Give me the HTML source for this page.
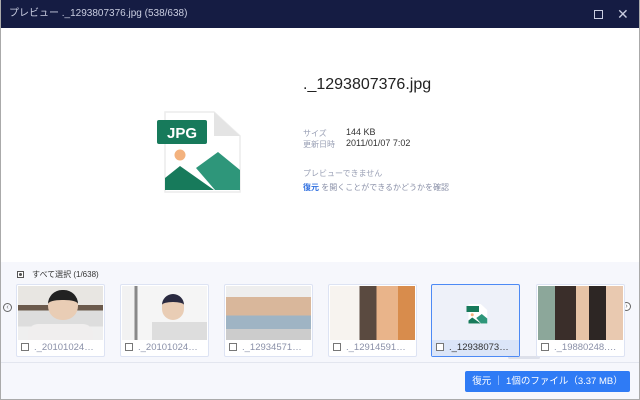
<!DOCTYPE html>
<html><head><meta charset="utf-8"><style>
*{margin:0;padding:0;box-sizing:border-box}
body{width:640px;height:400px;overflow:hidden;font-family:"Liberation Sans","Noto Sans CJK JP",sans-serif;background:#fff;position:relative}
.title{position:absolute;left:0;top:0;width:640px;height:28px;background:#151c43;color:#c9cde0;font-size:10px;line-height:28px;padding-left:9px}
.main{position:absolute;left:0;top:28px;width:640px;height:234px;background:#fff}
.strip{position:absolute;left:0;top:262px;width:640px;height:138px;background:#f6f7fc}
.thumb{position:absolute;top:284px;width:89px;height:73px;background:#fff;border:1px solid #dde3f3;border-radius:2px}
.thumb .img{position:absolute;left:1px;top:1px;right:1px;height:54px;overflow:hidden}
.thumb .lab{position:absolute;left:4px;top:57px;font-size:9.5px;color:#8a90a8;white-space:nowrap}
.cb{display:inline-block;width:8px;height:8px;border:1px solid #777;vertical-align:-1px;margin-right:5px;background:#fff}
.sel{border:1.5px solid #4d8af5;background:#eef1f9}
.btn{position:absolute;left:465px;top:371px;width:165px;height:21px;background:#2f7bf5;border-radius:2px;color:#fff;font-size:9.5px;text-align:center;line-height:21px}
.frame{position:absolute;left:0;top:0;width:640px;height:400px;border:1px solid #aaa;border-top:none;pointer-events:none}
</style></head><body>
<div class="title">プレビュー ._1293807376.jpg (538/638)
<span style="position:absolute;left:594px;top:10px;width:9px;height:9px;border:1.3px solid #c9cde0"></span>
<span style="position:absolute;left:617px;top:0;font-size:14px;color:#c9cde0">✕</span></div>
<div class="main">
<svg style="position:absolute;left:150px;top:72px" width="100" height="100" viewBox="150 100 100 100">
<path d="M165 112 H214 L240 136 V192 H165 Z" fill="#fff" stroke="#ececec" stroke-width="1.5"/>
<path d="M214 112 V136 H240 Z" fill="#e4e4e4"/>
<rect x="157" y="120" width="50" height="24" rx="2" fill="#177a5b"/>
<text x="182" y="138" font-family="Liberation Sans" font-weight="bold" font-size="15" fill="#fff" text-anchor="middle">JPG</text>
<circle cx="180" cy="155" r="5.5" fill="#f3b27e"/>
<path d="M196 168 L218 152 L240 170 V190 H215 Z" fill="#2e967a"/>
<path d="M165 178 L180 166 L214 190 H165 Z" fill="#177a5b"/>
</svg>
<div style="position:absolute;left:303px;top:48px;font-size:16px;color:#222">._1293807376.jpg</div>
<div style="position:absolute;left:303px;top:100px;font-size:8px;color:#9aa0b5;line-height:11px">サイズ<br>更新日時</div>
<div style="position:absolute;left:346px;top:99px;font-size:9px;color:#333;line-height:11px">144 KB<br>2011/01/07 7:02</div>
<div style="position:absolute;left:303px;top:140px;font-size:8px;color:#9aa0b5">プレビューできません</div>
<div style="position:absolute;left:303px;top:154px;font-size:8px;color:#8a90a8"><b style="color:#2f6fe0">復元</b> を開くことができるかどうかを確認</div>
</div>
<div class="strip">
<div style="position:absolute;left:17px;top:7px;font-size:8px;color:#333"><span style="display:inline-block;width:7px;height:7px;border:1px solid #555;background:radial-gradient(#555 40%,#fff 45%);vertical-align:-1px;margin-right:8px"></span>すべて選択 (1/638)</div>
<div style="position:absolute;left:3px;top:41px;width:9px;height:9px;border:1px solid #666;border-radius:50%;font-size:7px;line-height:7px;text-align:center;color:#666">‹</div>
<div style="position:absolute;left:622px;top:40px;width:9px;height:9px;border:1px solid #666;border-radius:50%;font-size:7px;line-height:7px;text-align:center;color:#666;background:#fff">›</div>
<div style="position:absolute;left:508px;top:94px;width:32px;height:3px;background:#dde0ea;border-radius:2px"></div>
<div style="position:absolute;left:0;top:100px;width:640px;height:1px;background:#e3e6ef"></div>
</div>
<div class="thumb" style="left:16px"><div class="img" style="background:linear-gradient(#e8e6e2 0 35%,#6b5a4c 35% 45%,#ddd 45% 75%,#efefef 75%)"><div style="position:absolute;left:30px;top:4px;width:30px;height:30px;background:#e9cdb5;border-top:10px solid #222;border-radius:14px"></div><div style="position:absolute;left:10px;bottom:0;width:65px;height:16px;background:#f0eeee;border-radius:10px 10px 0 0"></div></div><div class="lab"><span class="cb"></span>._20101024…</div></div>
<div class="thumb" style="left:120px"><div class="img" style="background:linear-gradient(90deg,#f2f2f2 0 15%,#888 15% 18%,#f5f5f5 18%)"><div style="position:absolute;left:40px;top:8px;width:22px;height:26px;background:#e9cdb5;border-top:8px solid #2a2a40;border-radius:11px"></div><div style="position:absolute;left:30px;bottom:0;width:55px;height:18px;background:#ddd"></div></div><div class="lab"><span class="cb"></span>._20101024…</div></div>
<div class="thumb" style="left:224px"><div class="img" style="background:linear-gradient(#eee 0 20%,#d9b79b 20% 55%,#9fb4c4 55% 80%,#ccc 80%)"></div><div class="lab"><span class="cb"></span>._12934571…</div></div>
<div class="thumb" style="left:328px"><div class="img" style="background:linear-gradient(90deg,#f7f3ef 0 35%,#5a4a40 35% 55%,#e9b48a 55% 80%,#d88c4c 80%)"></div><div class="lab"><span class="cb"></span>._12914591…</div></div>
<div class="thumb sel" style="left:431px"><div class="img" style="background:#eef1f9">
<svg style="position:absolute;left:33px;top:17px" width="22" height="22" viewBox="155 110 88 84"><path d="M165 112H214L240 136V192H165Z" fill="#fff"/><rect x="157" y="120" width="50" height="24" fill="#177a5b"/><circle cx="180" cy="155" r="6" fill="#f3b27e"/><path d="M196 168L218 152L240 170V190H215Z" fill="#2e967a"/><path d="M165 178L180 166L214 190H165Z" fill="#177a5b"/></svg></div>
<div style="position:absolute;left:0;right:0;top:55px;height:16px;background:#dbe5f8"></div>
<div class="lab" style="color:#333"><span class="cb"></span>._12938073…</div></div>
<div class="thumb" style="left:536px"><div class="img" style="background:linear-gradient(90deg,#8ca79a 0 20%,#3a2e2a 20% 45%,#e6c3a6 45% 60%,#2d2624 60% 80%,#e9c9b0 80%)"></div><div class="lab"><span class="cb"></span>._19880248.…</div></div>
<div class="btn">復元 ｜ 1個のファイル（3.37 MB）</div>
<div class="frame"></div>
</body></html>
